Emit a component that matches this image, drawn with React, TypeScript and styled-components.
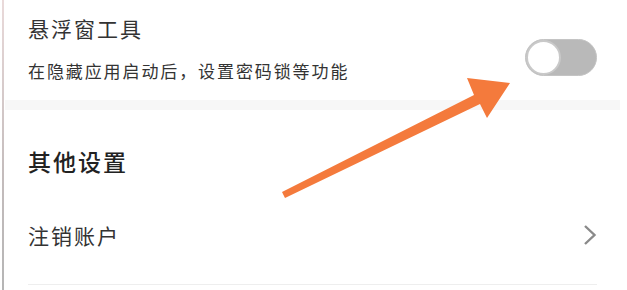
import React from 'react';
import styled, { createGlobalStyle } from 'styled-components';

const GlobalStyle = createGlobalStyle`
  html, body {
    margin: 0;
    padding: 0;
    background: #ffffff;
  }
  body {
    font-family: "Noto Sans CJK SC", "Noto Sans", sans-serif;
  }
`;

const Page = styled.div`
  position: relative;
  width: 623px;
  height: 290px;
  margin-left: 2px;
  border-left: 2px solid;
  border-image: linear-gradient(#eadada, #c4bcbc 60%, #b5b5b5) 1;
  overflow: hidden;
`;

const SettingRow = styled.div`
  height: 100px;
  display: flex;
  align-items: flex-start;
  justify-content: space-between;
  padding: 14px 30px 0 24px;
  box-sizing: border-box;
`;

const TextBlock = styled.div`
  display: flex;
  flex-direction: column;
  gap: 17px;
`;

const Title = styled.div`
  font-size: 21px;
  line-height: 28px;
  letter-spacing: 2px;
  color: #333333;
`;

const Subtitle = styled.div`
  font-size: 17px;
  line-height: 24px;
  letter-spacing: 1.9px;
  color: #333333;
`;

const Track = styled.div<{ $on?: boolean }>`
  align-self: center;
  width: 72px;
  height: 37px;
  border-radius: 19px;
  box-sizing: border-box;
  border: 1px solid #c4c4c4;
  background: ${(p) => (p.$on ? '#f47a3c' : '#b9b9b9')};
  display: flex;
  align-items: center;
  justify-content: ${(p) => (p.$on ? 'flex-end' : 'flex-start')};
`;

const Knob = styled.div`
  width: 35px;
  height: 35px;
  border-radius: 50%;
  box-sizing: border-box;
  border: 2px solid #c9c9c9;
  background: #ffffff;
`;

const Band = styled.div`
  height: 10px;
  margin: 0 7px 0 1px;
  background: #f7f7f7;
`;

const SectionHeader = styled.div`
  padding: 37px 0 0 24px;
  font-size: 23px;
  line-height: 28px;
  letter-spacing: 2px;
  font-weight: 500;
  color: #222222;
`;

const ItemRow = styled.div`
  height: 110px;
  box-sizing: border-box;
  padding-top: 10px;
  margin: 0 30px 0 24px;
  display: flex;
  align-items: center;
  justify-content: space-between;
  border-bottom: 1px solid #eeeeee;
`;

const ItemLabel = styled.div`
  font-size: 21px;
  letter-spacing: 2px;
  color: #333333;
`;

const Chevron = styled.svg`
  width: 14px;
  height: 22px;
`;

const ArrowOverlay = styled.svg`
  position: absolute;
  left: -4px;
  top: 0;
  width: 627px;
  height: 290px;
  pointer-events: none;
`;

export default function App() {
  return (
    <>
      <GlobalStyle />
      <Page>
        <SettingRow>
          <TextBlock>
            <Title>悬浮窗工具</Title>
            <Subtitle>在隐藏应用启动后，设置密码锁等功能</Subtitle>
          </TextBlock>
          <Track>
            <Knob />
          </Track>
        </SettingRow>
        <Band />
        <SectionHeader>其他设置</SectionHeader>
        <ItemRow>
          <ItemLabel>注销账户</ItemLabel>
          <Chevron viewBox="0 0 14 22">
            <path d="M2 2 L11.5 11 L2 20" fill="none" stroke="#8a8a8a" strokeWidth="2.4" strokeLinejoin="miter" />
          </Chevron>
        </ItemRow>
        <ArrowOverlay viewBox="0 0 627 290">
          <polygon
            points="282,192 474,95 467,78 510,83 487,118 480,104 285,198"
            fill="#f47a3c"
          />
        </ArrowOverlay>
      </Page>
    </>
  );
}
